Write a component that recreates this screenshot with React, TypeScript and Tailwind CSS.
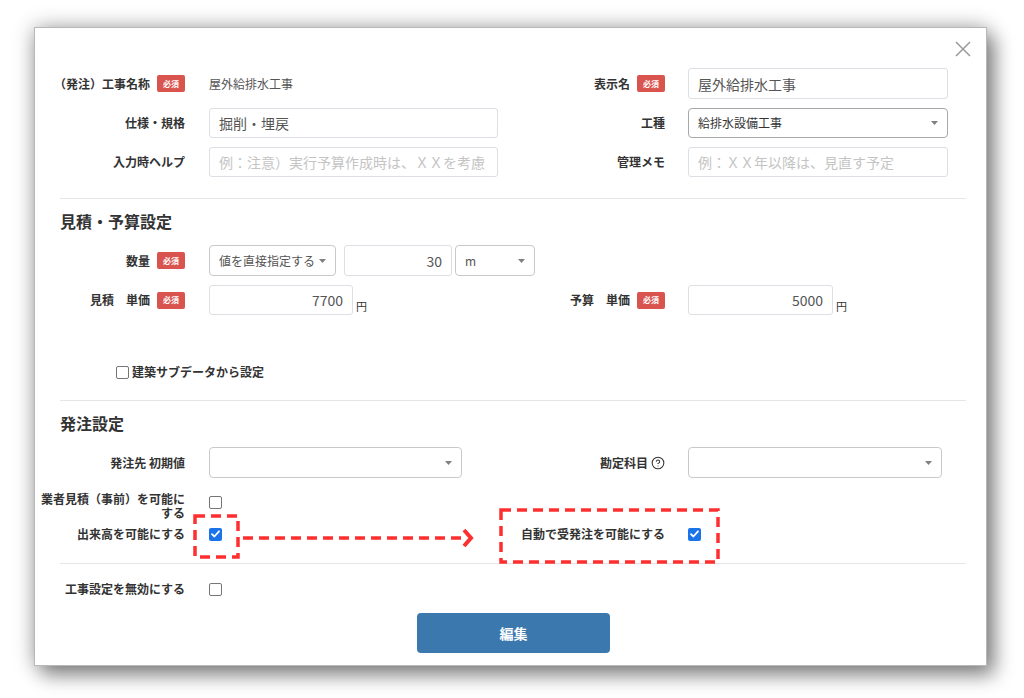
import React from 'react';
import { CircleHelp } from 'lucide-react';

const Badge = () => (
  <span className="inline-flex h-[17px] w-[28px] shrink-0 items-center justify-center rounded-[2px] bg-[#d9534f] text-[8px] font-bold leading-none text-white">
    必須
  </span>
);

const Caret = () => (
  <svg width="7" height="4" viewBox="0 0 7 4" className="absolute right-[9px] top-1/2 -translate-y-1/2">
    <path d="M0 0h7L3.5 4z" fill="#808080" />
  </svg>
);

const Label = ({ children, badge, help }: { children: React.ReactNode; badge?: boolean; help?: boolean }) => (
  <div className="flex w-[145px] shrink-0 items-center justify-end gap-[7px] text-right text-[12px] font-bold leading-[14px] text-[#333]">
    <span>{children}</span>
    {help && <CircleHelp size={14} strokeWidth={1.8} className="-ml-[4px] text-[#333]" />}
    {badge && <Badge />}
  </div>
);

const TextInput = ({ value, placeholder, width, right }: { value?: string; placeholder?: string; width: string; right?: boolean }) => (
  <input
    readOnly
    defaultValue={value}
    placeholder={placeholder}
    className={`${width} h-full rounded-[3px] border border-[#dcdfe3] bg-white px-[9px] text-[14px] text-[#555] outline-none placeholder:text-[#c4c4c4] ${right ? 'text-right' : ''}`}
  />
);

const Select = ({ value, width, small }: { value?: string; width: string; small?: boolean }) => (
  <div className={`relative flex h-full ${width} items-center rounded-[4px] border border-[#c9c9c9] bg-white pl-[9px] ${small ? 'text-[12px] text-[#555]' : 'text-[12px] text-[#333]'}`}>
    {value}
    <Caret />
  </div>
);

const Check = ({ checked }: { checked?: boolean }) =>
  checked ? (
    <span className="flex h-[13px] w-[13px] items-center justify-center rounded-[2px] bg-[#1a73e8]">
      <svg width="9" height="8" viewBox="0 0 9 8">
        <path d="M1 4.2 3.4 6.5 8 1.3" fill="none" stroke="white" strokeWidth="1.8" strokeLinecap="round" strokeLinejoin="round" />
      </svg>
    </span>
  ) : (
    <span className="block h-[13px] w-[13px] rounded-[2px] border border-[#767676] bg-white" />
  );

const Divider = ({ className }: { className: string }) => <div className={`border-t border-[#e6e6e6] ${className}`} />;

export default function App() {
  return (
    <div className="h-[698px] w-[1024px] overflow-hidden bg-white pl-[34px] pt-[27px] font-['Noto_Sans_CJK_JP',sans-serif]">
      <div className="relative h-[639px] w-[953px] border border-[#b8b8b8] bg-white pl-[25px] pr-[20px] pt-[40px] shadow-[0_0_20px_rgba(0,0,0,0.32),8px_10px_18px_rgba(0,0,0,0.38)]">
        {/* close */}
        <svg width="16" height="16" viewBox="0 0 16 16" className="absolute right-[15px] top-[13px]">
          <path d="M1 1l14 14M15 1 1 15" stroke="#9a9a9a" strokeWidth="1.5" />
        </svg>

        {/* basic info */}
        <div className="-ml-[20px] grid h-[31px] grid-cols-[480px_1fr]">
          <div className="flex items-center gap-6">
            <Label badge>（発注）工事名称</Label>
            <span className="text-[12px] text-[#555]">屋外給排水工事</span>
          </div>
          <div className="flex items-center gap-[23px]">
            <Label badge>表示名</Label>
            <TextInput value="屋外給排水工事" width="w-[260px]" />
          </div>
        </div>
        <div className="-ml-[20px] mt-[9px] grid h-[30px] grid-cols-[480px_1fr]">
          <div className="flex items-center gap-6">
            <Label>仕様・規格</Label>
            <TextInput value="掘削・埋戻" width="w-[289px]" />
          </div>
          <div className="flex items-center gap-[23px]">
            <Label>工種</Label>
            <div className="relative flex h-full w-[260px] items-center rounded-[4px] border border-[#a8a8a8] bg-white pl-[9px] text-[12px] text-[#333]">
              給排水設備工事
              <Caret />
            </div>
          </div>
        </div>
        <div className="-ml-[20px] mt-[9px] grid h-[30px] grid-cols-[480px_1fr]">
          <div className="flex items-center gap-6">
            <Label>入力時ヘルプ</Label>
            <TextInput placeholder="例：注意）実行予算作成時は、ＸＸを考慮" width="w-[289px]" />
          </div>
          <div className="flex items-center gap-[23px]">
            <Label>管理メモ</Label>
            <TextInput placeholder="例：ＸＸ年以降は、見直す予定" width="w-[260px]" />
          </div>
        </div>

        <Divider className="mt-[21px]" />

        {/* estimate */}
        <h2 className="mt-[11px] h-[22px] text-[16px] font-bold leading-[22px] text-[#333]">見積・予算設定</h2>
        <div className="-ml-[20px] mt-[13px] flex h-[31px] items-center gap-6">
          <Label badge>数量</Label>
          <div className="flex h-full items-center">
            <Select value="値を直接指定する" width="w-[127px]" small />
            <div className="ml-[8px] h-full">
              <TextInput value="30" width="w-[108px]" right />
            </div>
            <div className="ml-[3px] h-full">
              <Select value="m" width="w-[80px]" small />
            </div>
          </div>
        </div>
        <div className="-ml-[20px] mt-[9px] grid h-[30px] grid-cols-[480px_1fr]">
          <div className="flex items-center gap-6">
            <Label badge>見積　単価</Label>
            <div className="flex h-full">
              <TextInput value="7700" width="w-[144px]" right />
              <span className="ml-[3px] self-end pb-[1px] text-[11px] text-[#333]">円</span>
            </div>
          </div>
          <div className="flex items-center gap-[23px]">
            <Label badge>予算　単価</Label>
            <div className="flex h-full">
              <TextInput value="5000" width="w-[145px]" right />
              <span className="ml-[3px] self-end pb-[1px] text-[11px] text-[#333]">円</span>
            </div>
          </div>
        </div>
        <div className="ml-[56px] mt-[49px] flex h-[16px] items-center gap-[3px] text-[12px] font-bold text-[#333]">
          <Check />
          <span>建築サブデータから設定</span>
        </div>

        <Divider className="mt-[20px]" />

        {/* order */}
        <h2 className="mt-[11px] h-[22px] text-[16px] font-bold leading-[22px] text-[#333]">発注設定</h2>
        <div className="-ml-[20px] mt-[13px] grid h-[31px] grid-cols-[480px_1fr]">
          <div className="flex items-center gap-6">
            <Label>発注先 初期値</Label>
            <Select width="w-[253px]" />
          </div>
          <div className="flex items-center gap-[23px]">
            <Label help>勘定科目</Label>
            <Select width="w-[254px]" />
          </div>
        </div>
        <div className="-ml-[20px] mt-[14px] flex items-start gap-6">
          <Label>業者見積（事前）を可能にする</Label>
          <div className="mt-[4px]">
            <Check />
          </div>
        </div>
        <div className="-ml-[20px] mt-[7px] grid h-[14px] grid-cols-[480px_1fr]">
          <div className="flex items-center gap-6">
            <Label>出来高を可能にする</Label>
            <Check checked />
          </div>
          <div className="flex items-center gap-[23px]">
            <Label>自動で受発注を可能にする</Label>
            <Check checked />
          </div>
        </div>

        <Divider className="mt-[22px]" />

        <div className="-ml-[20px] mt-[18px] flex h-[14px] items-center gap-6">
          <Label>工事設定を無効にする</Label>
          <Check />
        </div>

        <button className="ml-[357px] mt-[17px] flex h-[40px] w-[193px] items-center justify-center rounded-[4px] bg-[#3b78ad] text-[14px] font-bold text-white">
          編集
        </button>

        {/* annotation overlay */}
        <svg className="pointer-events-none absolute left-0 top-0" width="953" height="639">
          <g fill="none" stroke="#ff2f2f" strokeWidth="3.5" strokeDasharray="10 6">
            <rect x="160" y="488" width="43" height="41" />
            <path d="M208 510H430" />
            <rect x="466" y="482" width="217" height="52" />
          </g>
          <path d="M429 502l7 8-7 8" fill="none" stroke="#ff2f2f" strokeWidth="4" />
        </svg>
      </div>
    </div>
  );
}
